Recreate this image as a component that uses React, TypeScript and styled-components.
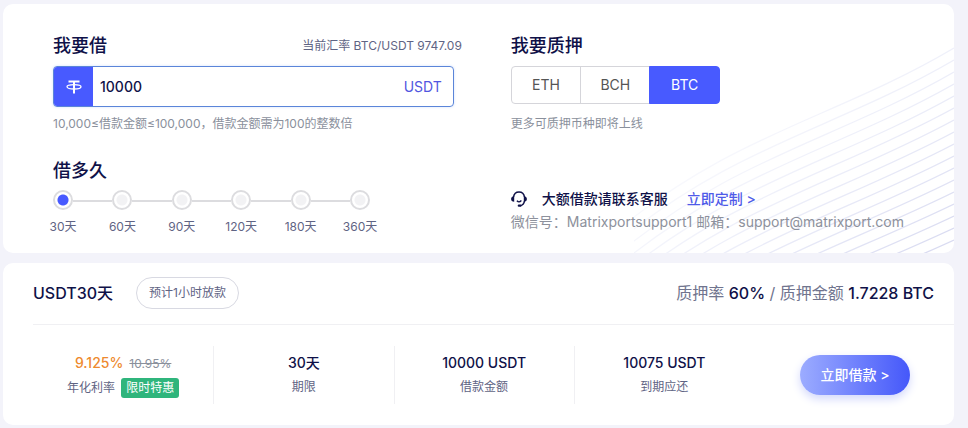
import { useState } from "react";
import styled, { createGlobalStyle, css } from "styled-components";

const NAVY = "#0f1148";
const SLATE = "#5f6484";
const BLUE = "#485aff";

const GlobalStyle = createGlobalStyle`
  *, *::before, *::after { box-sizing: border-box; }
  body {
    margin: 0;
    background: #f3f3fa;
    color: ${NAVY};
    font-family: Inter, "Noto Sans CJK SC", sans-serif;
    font-size: 12px;
    line-height: 20px;
  }
  button, input { font: inherit; color: inherit; }
`;

const Page = styled.main`
  display: flex;
  flex-direction: column;
  gap: 10px;
  padding: 4px 14px 3px 3px;
`;

const Card = styled.section`
  position: relative;
  overflow: hidden;
  border-radius: 10px;
  background: #fff;
`;

const Waves = styled.svg`
  position: absolute;
  right: 0;
  bottom: 0;
  width: 320px;
  height: 220px;
  pointer-events: none;
`;

const FormGrid = styled.div`
  position: relative;
  display: grid;
  grid-template-columns: 458fr 393fr;
  row-gap: 23px;
  padding: 28px 50px 16px;
`;

const Block = styled.div`
  min-width: 0;
`;

const Heading = styled.h2`
  margin: 0;
  font-size: 18px;
  font-weight: 500;
  line-height: 28px;
`;

const HeadingRow = styled.div`
  display: flex;
  justify-content: space-between;
  align-items: center;
  margin-right: 49px;
`;

const Rate = styled.span`
  color: ${SLATE};
`;

const AmountField = styled.label`
  display: flex;
  align-items: center;
  height: 41px;
  margin: 6px 57px 7px 0;
  border: 1px solid #5b85d9;
  border-radius: 4px;
  overflow: hidden;
  box-shadow: 0 0 3px #d5e2fb;
  font-size: 14px;
`;

const CoinBadge = styled.span`
  display: flex;
  flex: none;
  align-items: center;
  justify-content: center;
  width: 39px;
  height: 100%;
  background: ${BLUE};
`;

const AmountInput = styled.input`
  flex: 1;
  min-width: 0;
  height: 100%;
  padding: 0 7px;
  border: 0;
  outline: 0;
  background: #fff;
  font-weight: 500;
`;

const Unit = styled.span`
  padding-right: 11px;
  color: #5156df;
`;

const Hint = styled.p`
  margin: 0;
  color: #8a909c;
`;

const CoinGroup = styled.div`
  display: flex;
  width: 209px;
  margin: 6px 0 10px;
`;

const CoinButton = styled.button<{ $active: boolean }>`
  flex: 1;
  height: 38px;
  padding: 0;
  border: 1px solid #d5d5da;
  background: #fff;
  color: #555;
  font-size: 14px;
  cursor: pointer;
  & + & { margin-left: -1px; }
  &:first-child { border-radius: 4px 0 0 4px; }
  &:last-child { border-radius: 0 4px 4px 0; }
  ${(p) =>
    p.$active &&
    css`
      z-index: 1;
      border-color: ${BLUE};
      background: ${BLUE};
      color: #fff;
    `}
`;

const Terms = styled.div`
  display: flex;
  width: 317px;
  margin-top: 5px;
`;

const Term = styled.label`
  display: flex;
  flex: none;
  flex-direction: column;
  align-items: center;
  gap: 7px;
  width: 20px;
  color: ${SLATE};
  white-space: nowrap;
  cursor: pointer;
`;

const TermRadio = styled.input`
  appearance: none;
  flex: none;
  width: 20px;
  height: 20px;
  margin: 0;
  border: 2px solid #dcdcdf;
  border-radius: 50%;
  background: radial-gradient(circle, #f2f2f4 5px, #fff 6px);
  &:checked { background: radial-gradient(circle, ${BLUE} 5px, #fff 6px); }
`;

const TermLine = styled.span`
  flex: 1;
  height: 2px;
  margin-top: 10px;
  background: #dcdcdf;
`;

const Support = styled.div`
  align-self: start;
  padding-top: 30px;
  font-size: 14px;
`;

const SupportRow = styled.div`
  display: flex;
  align-items: center;
  height: 24px;
  font-weight: 500;
`;

const SupportText = styled.span`
  margin: 0 19px 0 15px;
`;

const CustomLink = styled.a`
  color: #4f5be8;
  text-decoration: none;
`;

const Contact = styled.p`
  margin: 0;
  color: #8d919c;
  line-height: 22px;
  white-space: nowrap;
`;

const Summary = styled.header`
  display: flex;
  align-items: center;
  margin-left: 30px;
  padding: 0 20px 2px 0;
  height: 62px;
  border-bottom: 1px solid #f0f0f3;
`;

const SummaryTitle = styled.h2`
  margin: 0 23px 0 0;
  font-size: 16px;
  font-weight: 500;
  line-height: 24px;
`;

const Pill = styled.span`
  padding: 5px 12px;
  border: 1px solid #d8d9e2;
  border-radius: 16px;
  color: ${SLATE};
`;

const Pledge = styled.p`
  margin: 0 0 0 auto;
  color: #70748e;
  font-size: 16px;
`;

const Strong = styled.strong`
  color: ${NAVY};
  font-weight: 500;
`;

const Details = styled.div`
  display: flex;
  align-items: center;
  padding: 21px 44px 21px 30px;
`;

const Stats = styled.dl`
  display: grid;
  flex: 1;
  grid-template-columns: repeat(4, 1fr);
  margin: 0;
`;

const Stat = styled.div`
  display: flex;
  flex-direction: column-reverse;
  align-items: center;
  justify-content: center;
  gap: 4px;
  height: 58px;
  white-space: nowrap;
  & + & { border-left: 1px solid #f0f0f3; }
`;

const StatValue = styled.dd`
  margin: 0;
  font-size: 14px;
  font-weight: 500;
`;

const StatLabel = styled.dt`
  display: flex;
  align-items: center;
  gap: 6px;
  color: ${SLATE};
`;

const Discount = styled.span`
  color: #ee8a2e;
`;

const OldRate = styled.s`
  margin-left: 6px;
  color: #8a909c;
  font-size: 12px;
  font-weight: 400;
`;

const Tag = styled.span`
  padding: 0 5px;
  border-radius: 3px;
  background: #2fb57c;
  color: #fff;
`;

const BorrowButton = styled.button`
  flex: none;
  width: 110px;
  height: 40px;
  margin-left: 46px;
  padding: 0;
  border: 0;
  border-radius: 20px;
  background: linear-gradient(90deg, #9cacff, #4558fa);
  box-shadow: 0 4px 10px #d3d8fb;
  color: #fff;
  font-size: 14px;
  font-weight: 500;
  cursor: pointer;
`;

function TetherIcon() {
  return (
    <svg width="16" height="14" viewBox="0 0 16 14" fill="none" stroke="#fff" aria-hidden="true">
      <path d="M2.500 1.500h11" strokeWidth="1.800" />
      <path d="M8 1.500V13.500" strokeWidth="2" />
      <ellipse cx="8" cy="6.800" rx="7" ry="2.200" strokeWidth="1.300" />
    </svg>
  );
}

function HeadsetIcon() {
  return (
    <svg width="16" height="16" viewBox="0 0 16 16" fill="none" stroke={NAVY} aria-hidden="true">
      <path d="M2.500 6C3 2.800 5.100 1 8 1s5 1.800 5.500 5" strokeWidth="1.500" />
      <path
        d="M3.200 5.200v5.600C1.200 10.800.1 9.700.1 8s1.100-2.800 3.100-2.800zM12.800 5.200v5.600c2 0 3.100-1.100 3.100-2.800s-1.100-2.800-3.100-2.800z"
        fill={NAVY}
        stroke="none"
      />
      <path d="M13.500 10c-.4 2.700-1.900 4.300-4.500 4.800" strokeWidth="1.500" />
      <path d="M7.800 14.700h1.600" strokeWidth="2.200" strokeLinecap="round" />
      <path d="M5.800 9.800c1.300 1.200 3.300 1.100 4.600-.3" strokeWidth="1.200" />
    </svg>
  );
}

const waveIndexes = Array.from({ length: 18 }, (_, i) => i - 1);

function WaveLines() {
  return (
    <Waves viewBox="0 0 320 220" fill="none" aria-hidden="true">
      <defs>
        <linearGradient id="fade" gradientUnits="userSpaceOnUse" x1="90" y1="40" x2="260" y2="250">
          <stop offset="0" stopColor="#dcdff4" stopOpacity="0" />
          <stop offset="0.5" stopColor="#dcdff4" stopOpacity="0.5" />
          <stop offset="1" stopColor="#d9dbf1" stopOpacity="1" />
        </linearGradient>
      </defs>
      {waveIndexes.map((i) => {
        const y = 207 - i * 12;
        return (
          <path
            key={i}
            d={`M-20 ${y + 185} C100 ${y + 85} 200 ${y + 55 + i} 320 ${y}`}
            stroke="url(#fade)"
            strokeWidth="1.300"
          />
        );
      })}
    </Waves>
  );
}

const coins = ["ETH", "BCH", "BTC"];
const terms = [30, 60, 90, 120, 180, 360];

export default function App() {
  const [amount, setAmount] = useState("10000");
  const [coin, setCoin] = useState("BTC");
  const [term, setTerm] = useState(30);

  return (
    <>
      <GlobalStyle />
      <Page>
        <Card>
          <WaveLines />
          <FormGrid>
            <Block>
              <HeadingRow>
                <Heading>我要借</Heading>
                <Rate>当前汇率 BTC/USDT 9747.09</Rate>
              </HeadingRow>
              <AmountField>
                <CoinBadge>
                  <TetherIcon />
                </CoinBadge>
                <AmountInput
                  aria-label="我要借"
                  inputMode="numeric"
                  value={amount}
                  onChange={(e) => setAmount(e.target.value)}
                />
                <Unit>USDT</Unit>
              </AmountField>
              <Hint>10,000≤借款金额≤100,000，借款金额需为100的整数倍</Hint>
            </Block>
            <Block>
              <Heading>我要质押</Heading>
              <CoinGroup role="group" aria-label="我要质押">
                {coins.map((c) => (
                  <CoinButton key={c} type="button" $active={c === coin} aria-pressed={c === coin} onClick={() => setCoin(c)}>
                    {c}
                  </CoinButton>
                ))}
              </CoinGroup>
              <Hint>更多可质押币种即将上线</Hint>
            </Block>
            <Block>
              <Heading>借多久</Heading>
              <Terms role="radiogroup" aria-label="借多久">
                {terms.flatMap((t, i) => [
                  i > 0 && <TermLine key={`line-${t}`} />,
                  <Term key={t}>
                    <TermRadio type="radio" name="term" checked={t === term} onChange={() => setTerm(t)} />
                    <span>{t}天</span>
                  </Term>,
                ])}
              </Terms>
            </Block>
            <Support>
              <SupportRow>
                <HeadsetIcon />
                <SupportText>大额借款请联系客服</SupportText>
                <CustomLink href="#custom">立即定制 &gt;</CustomLink>
              </SupportRow>
              <Contact>微信号：Matrixportsupport1 邮箱：support@matrixport.com</Contact>
            </Support>
          </FormGrid>
        </Card>

        <Card>
          <Summary>
            <SummaryTitle>USDT30天</SummaryTitle>
            <Pill>预计1小时放款</Pill>
            <Pledge>
              质押率 <Strong>60%</Strong> / 质押金额 <Strong>1.7228 BTC</Strong>
            </Pledge>
          </Summary>
          <Details>
            <Stats>
              <Stat>
                <StatLabel>
                  年化利率<Tag>限时特惠</Tag>
                </StatLabel>
                <StatValue>
                  <Discount>9.125%</Discount>
                  <OldRate>10.95%</OldRate>
                </StatValue>
              </Stat>
              <Stat>
                <StatLabel>期限</StatLabel>
                <StatValue>30天</StatValue>
              </Stat>
              <Stat>
                <StatLabel>借款金额</StatLabel>
                <StatValue>10000 USDT</StatValue>
              </Stat>
              <Stat>
                <StatLabel>到期应还</StatLabel>
                <StatValue>10075 USDT</StatValue>
              </Stat>
            </Stats>
            <BorrowButton type="button">立即借款 &gt;</BorrowButton>
          </Details>
        </Card>
      </Page>
    </>
  );
}
